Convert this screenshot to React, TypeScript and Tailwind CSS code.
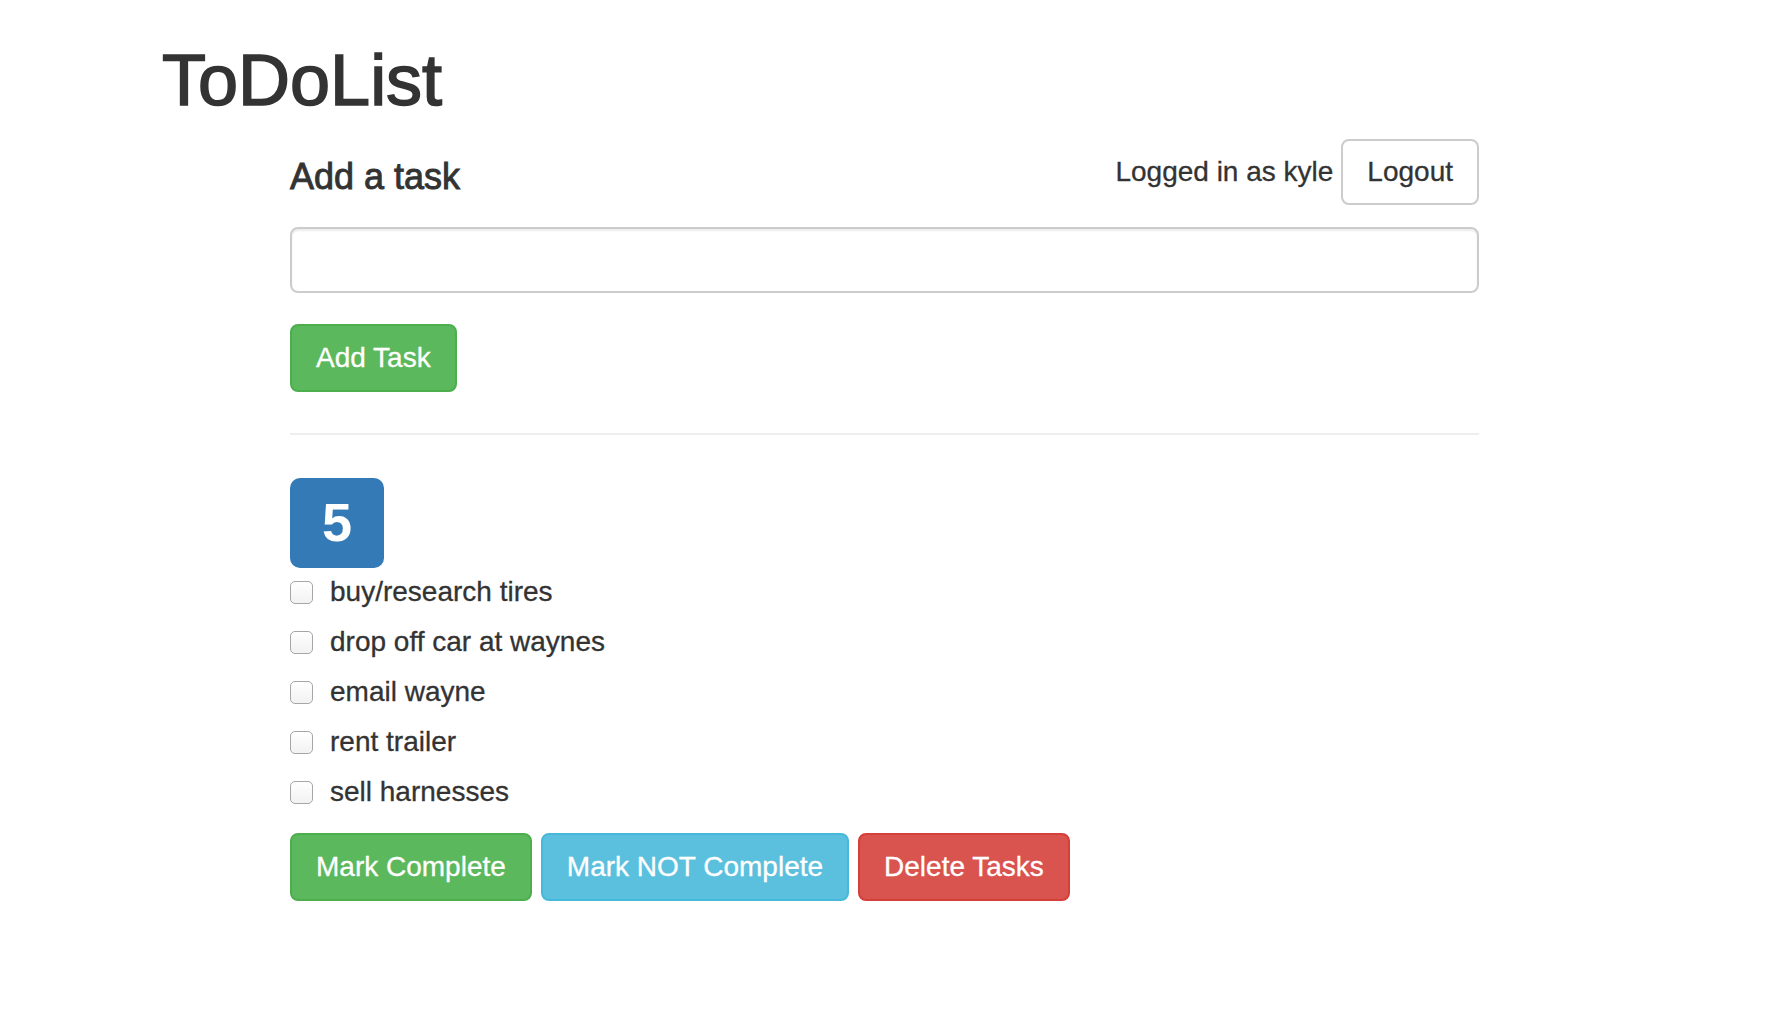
import { useState } from 'react';

const TASKS = [
  'buy/research tires',
  'drop off car at waynes',
  'email wayne',
  'rent trailer',
  'sell harnesses',
];

export default function App() {
  const [checked, setChecked] = useState<boolean[]>(TASKS.map(() => false));
  const [text, setText] = useState('');

  return (
    <div className="min-h-screen bg-white text-[#333] font-['Liberation_Sans',Arial,sans-serif]">
      <div className="pl-[162px] pt-[41px]">
        <h1 className="text-[72px] leading-[79px] font-medium [-webkit-text-stroke:1.6px_#333]">ToDoList</h1>
      </div>

      <div className="ml-[290px] w-[1189px] mt-[19px]">
        {/* Header row */}
        <div className="flex items-start justify-between">
          <h4 className="mt-[18px] text-[36px] leading-[40px] font-medium [-webkit-text-stroke:0.9px_#333]">Add a task</h4>
          <div className="flex items-center gap-[8px]">
            <span className="text-[28px] leading-[40px] [-webkit-text-stroke:0.3px_#333]">Logged in as kyle</span>
            <button className="h-[66px] px-[24px] border-2 border-[#ccc] rounded-[8px] bg-white text-[28px] leading-[40px] text-[#333] [-webkit-text-stroke:0.3px_#333]">
              Logout
            </button>
          </div>
        </div>

        <input
          value={text}
          onChange={(e) => setText(e.target.value)}
          className="mt-[22px] block w-full h-[66px] px-[24px] border-2 border-[#ccc] rounded-[8px] text-[28px] outline-none shadow-[inset_0_2px_2px_rgba(0,0,0,0.075)]"
        />

        <button className="mt-[31px] h-[68px] px-[24px] border-2 border-[#4cae4c] bg-[#5cb85c] rounded-[8px] text-white text-[28px] leading-[40px] [-webkit-text-stroke:0.3px_#fff]">
          Add Task
        </button>

        <div className="mt-[41px] h-[2px] bg-[#eee]" />

        <div className="mt-[43px] w-[94px] h-[90px] rounded-[10px] bg-[#337ab7] flex items-center justify-center text-white text-[54px] font-bold leading-none pb-[2px]">
          5
        </div>

        <ul className="mt-[4px] flex flex-col gap-[10px]">
          {TASKS.map((t, i) => (
            <li key={t} className="h-[40px] flex items-center">
              <input
                type="checkbox"
                checked={checked[i]}
                onChange={() => setChecked(checked.map((c, j) => (j === i ? !c : c)))}
                className="appearance-none w-[23px] h-[23px] border border-[#a6a6a6] rounded-[5px] bg-gradient-to-b from-white to-[#f2f2f2] checked:bg-[#337ab7]"
              />
              <span className="ml-[17px] text-[28px] leading-[40px] [-webkit-text-stroke:0.3px_#333]">{t}</span>
            </li>
          ))}
        </ul>

        <div className="mt-[21px] flex gap-[9px]">
          <button className="h-[68px] px-[24px] border-2 border-[#4cae4c] bg-[#5cb85c] rounded-[8px] text-white text-[28px] leading-[40px] [-webkit-text-stroke:0.3px_#fff]">
            Mark Complete
          </button>
          <button className="h-[68px] px-[24px] border-2 border-[#46b8da] bg-[#5bc0de] rounded-[8px] text-white text-[28px] leading-[40px] [-webkit-text-stroke:0.3px_#fff]">
            Mark NOT Complete
          </button>
          <button className="h-[68px] px-[24px] border-2 border-[#d43f3a] bg-[#d9534f] rounded-[8px] text-white text-[28px] leading-[40px] [-webkit-text-stroke:0.3px_#fff]">
            Delete Tasks
          </button>
        </div>
      </div>
    </div>
  );
}
